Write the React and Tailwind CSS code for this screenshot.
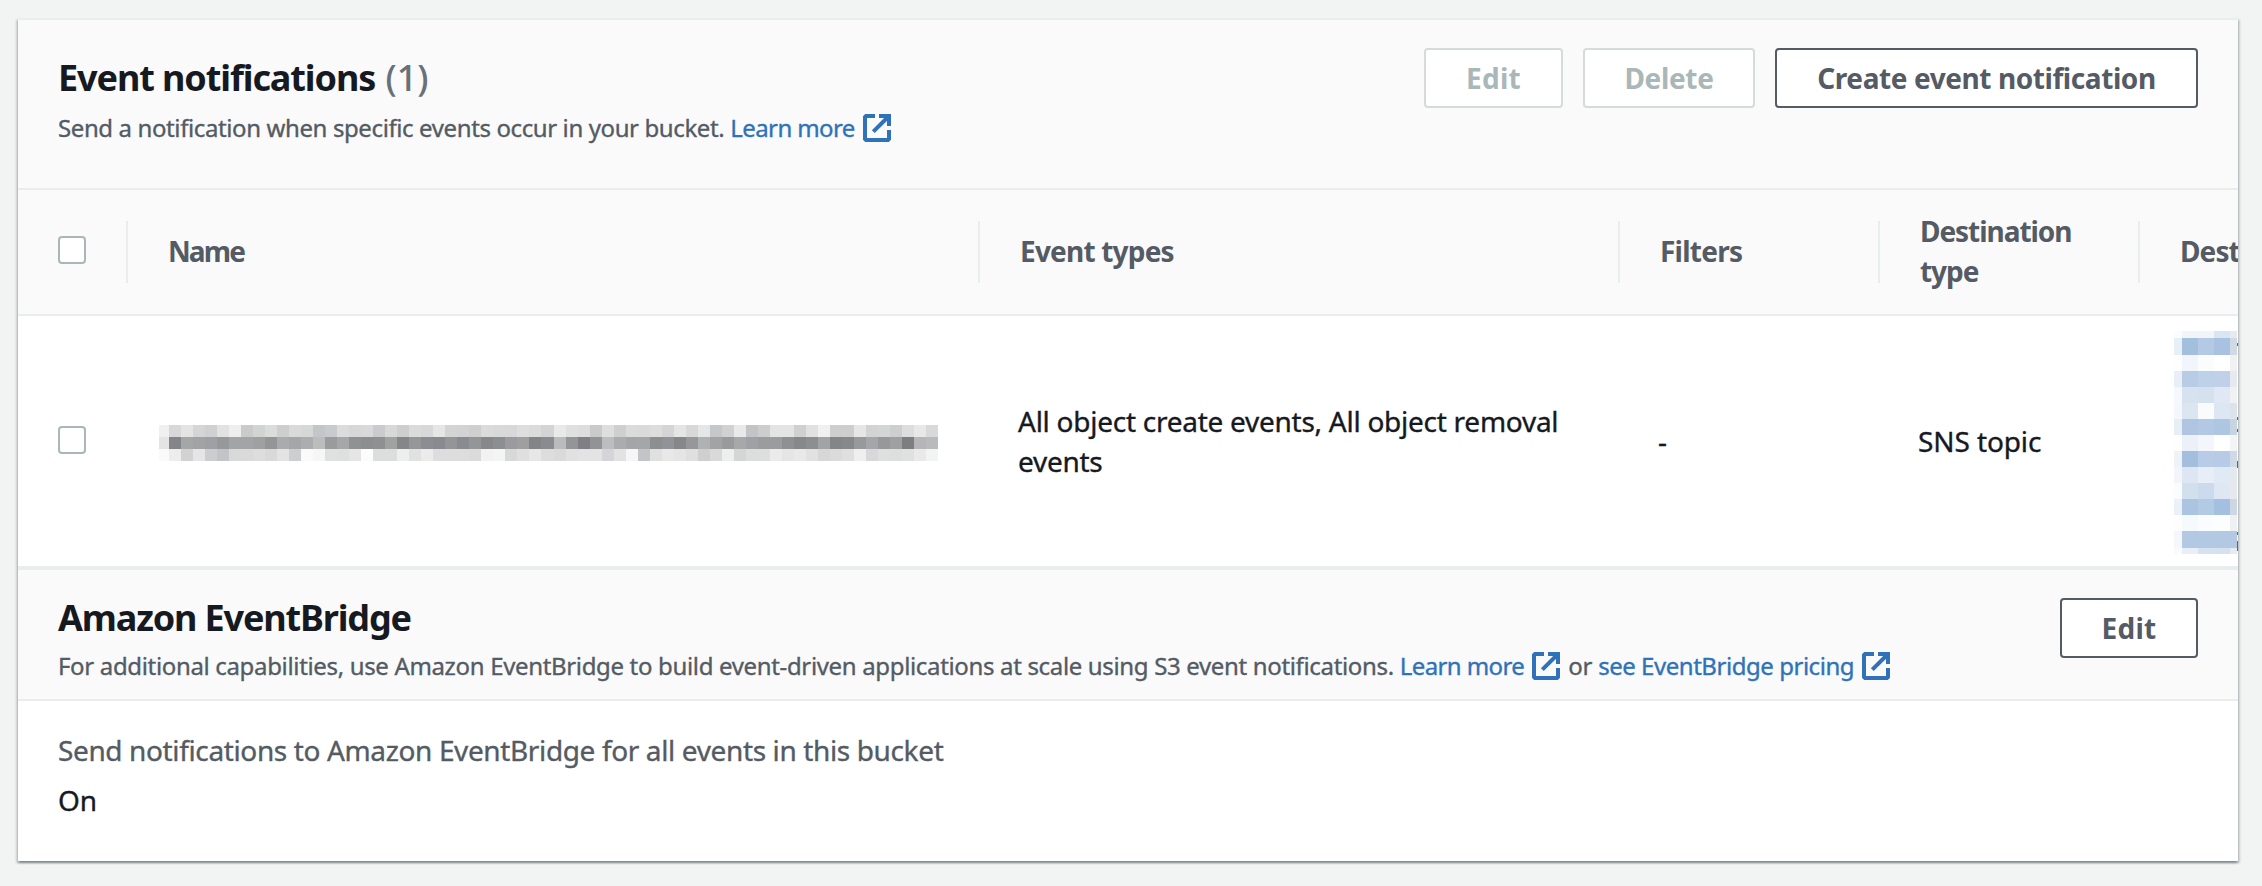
import React from "react";

const NAME_ROWS = [
  "f0f0f0 d8d8da e4e4e4 d4d5d7 cfd0d2 e2e2e2 eeeeee cacaca d2d4d2 dadddc cecece dadada d6d8d7 c4c5c8 c9cacd dcdcdc d7d7da d9d9da cacbce d7d9d8 cecece dadbdb d8d8db e6e6e6 d3d4d4 d3d3d3 cfcfd0 dadcdb d8dad9 d8d8db dededf dadcdc d4d4d6 e9e9ea dfe0df dddddd cacacb dedede cfcfd0 dadcdb dadada dddddd d5d5d5 e5e5e5 d8d8d8 e5e7e6 c6c7ca d0d2d2 e9e9e9 c3c4c7 cdcdcd e4e4e4 e3e5e4 d0d0d0 e1e1e1 f0f0f0 cecece cecece e6e6e6 d2d4d3 d4d5d5 cdced1 dddddd e8e8e8 d9d9d9",
  "e4e4e4 848589 a5a6a8 a2a3a5 9fa0a3 979899 a3a4a7 a3a4a6 9fa0a1 939597 aaabad a5a6a8 acadaf bcbcbc 999b9d a6a7a9 909193 8d8e90 8f9091 a1a1a2 858689 959698 8c8d93 898a8f 949597 8a8b90 949597 87888a 8d8e91 9b9b9d 9f9fa0 838488 8a8b8e bbbbbd 949597 807f84 929397 bdbdbf abacae a4a5a7 a5a6a8 8d8e90 929398 868789 979799 b0b1b3 a2a3a5 999a9c a7a8aa a0a1a4 9b9c9d 9b9c9e 8f9092 87888b 8d8e90 a2a3a5 848589 87888a 98999c a5a6a9 97989a 9fa0a2 7d7e80 b6b6b8 b8babb",
  "fafafa ecedec d2d2d2 e5e5e5 cccdd0 c3c4c7 d8dad9 dadada dddddd d9d9d9 e3e3e3 cdced0 fafafa f6f6f6 dfe0e0 dee0df e5e5e5 fcfcfc dcdedd dcdedd edefee e1e1e1 ebebeb dddddd dddddd dddddd dbdbdb f2f2f2 f3f5f4 d8d8d8 dfdfdf e7e7e7 dddddd dadada e1e1e1 e3e3e3 e3e3e3 d4d5d8 e2e2e2 f5f5f5 c3c4c7 e0e0e0 e8e8e8 e5e5e5 dfdfdf cfcfcf d9d9d9 edefee d4d6d6 dcdddd dddfdf ebebeb e5e5e5 e9e9e9 e1e1e1 d7d7d7 dbdbdb dfdfdf efefef d8d8d8 dfdfdf dcdfde e0e0e0 e9e9e9 f2f4f3",
].map((row) => row.split(" "));

const DEST_ROWS = [
  "fafcfe f1f5fa f1f5fb d9e5f2 e6eaef",
  "e8f0f7 a3bfde b4cae4 a9c2e1 cfdae6",
  "fefefe f2f5fb fafcfe ffffff f0f2f2",
  "e8eff6 b8cce5 bdd1e8 bfd0e8 e6eaf0",
  "f5f8fc d7e2f0 d5e1ef e0e8f5 f0f2f1",
  "f4f7fc dce6f1 f9fbfc dde7f3 dce3ea",
  "e7eff6 afc5e1 b2c8e3 adc6e1 c7d5e3",
  "fefefe ecf0f8 f3f6fc ffffff f3f4f4",
  "eef3f8 a3bfdd b9cce7 b7cbe6 d0dae6",
  "f2f6fb dde6f2 e7eef8 dfeaf5 e4e9ee",
  "fafcfe d2e0ee cbdaed dee7f3 e5e8ee",
  "eaf1f8 abc4e1 b3cae4 a4bfdf ccd7e3",
  "fefefe f5fafd fbfcff fcfdfe eff0f1",
  "f4f7fb b2c8e3 b2c8e3 b2c8e3 b2c8e3",
  "fafbfe e9eff8 d7e1f0 d5e1f1 e6eaf2",
].map((row) => row.split(" "));

function ExternalIcon() {
  return (
    <svg className="ml-2 h-7 w-7 shrink-0" viewBox="0 0 28 28" fill="none" stroke="#2f72b9" strokeWidth="4">
      <path d="M12 2H3L2 3V25L3 26H25L26 25V16" />
      <path d="M16 2H26V12" />
      <path d="M26 2L10.3 17.7" />
    </svg>
  );
}

function Link({ children, className }) {
  return (
    <a href="#" className={`flex items-center text-[#2f72b9] ${className}`}>
      <span>{children}</span>
      <ExternalIcon />
    </a>
  );
}

function Button({ children, disabled, className }) {
  return (
    <button
      disabled={disabled}
      className={`flex h-[60px] items-center justify-center rounded-[4px] border-2 bg-white pb-px text-[28px] leading-10 font-bold ${
        disabled ? "border-[#d5dbdb] text-[#aab7b8]" : "border-[#545b64] text-[#545b64]"
      } ${className}`}
    >
      {children}
    </button>
  );
}

function Checkbox({ className }) {
  return (
    <span
      role="checkbox"
      aria-checked="false"
      className={`block h-7 w-7 rounded-[4px] border-2 border-[#aab7b8] bg-white ${className}`}
    />
  );
}

function HeaderCell({ children, className }) {
  return (
    <div className="flex items-center">
      <span className="h-[62px] w-0.5 shrink-0 bg-[#eaeded]" />
      <span className={`pb-0.5 pl-10 ${className}`}>{children}</span>
    </div>
  );
}

function NameMosaic() {
  return (
    <div className="flex flex-col">
      {NAME_ROWS.map((row, r) => (
        <div key={r} className="flex h-3">
          {row.map((c, i) => (
            <span key={i} className={i === 0 ? "w-2.5" : "w-[12.03px]"} style={{ background: `#${c}` }} />
          ))}
        </div>
      ))}
    </div>
  );
}

function DestMosaic() {
  const last = DEST_ROWS.length - 1;
  return (
    <div className="relative flex w-16 flex-col">
      {DEST_ROWS.map((row, r) => (
        <div key={r} className={`flex ${r === 0 ? "h-[7.3px]" : r === last ? "h-[6.3px]" : "h-[16.08px]"}`}>
          {row.map((c, i) => (
            <span
              key={i}
              className={i === 0 ? "w-2" : i === 4 ? "w-[7px]" : "w-4"}
              style={{ background: `#${c}` }}
            />
          ))}
        </div>
      ))}
      <span className="absolute top-[12px] left-[63px] h-[3px] w-px bg-[#2f72b9]" />
      <span className="absolute top-[86px] left-[63px] h-[3px] w-px bg-[#2f72b9]" />
      <span className="absolute top-[98px] left-[63px] h-[3px] w-px bg-[#2f72b9]" />
      <span className="absolute top-[130px] left-[63px] h-[7px] w-px bg-[#2f72b9]" />
      <span className="absolute top-[201px] left-[63px] h-[3px] w-px bg-[#2f72b9]" />
      <span className="absolute top-[210px] left-[63px] h-[10px] w-px bg-[#2f72b9]" />
    </div>
  );
}

const COLUMNS = "grid grid-cols-[108px_852px_640px_260px_260px_100px]";
const STROKE = "[-webkit-text-stroke:0.35px_currentColor]";

export default function App() {
  return (
    <div className="h-[886px] w-[2262px] overflow-hidden bg-[#f2f3f3] pt-[18px] pl-[18px] font-['Noto_Sans','Open_Sans',sans-serif] text-[#16191f]">
      <main className="flex h-[843px] w-[2220px] flex-col border-t-2 border-[#eaeded] bg-white shadow-[0_2px_2px_0_rgba(0,28,36,0.3),2px_2px_2px_0_rgba(0,28,36,0.15),-2px_2px_2px_0_rgba(0,28,36,0.15)]">
        <header className="flex h-[170px] shrink-0 justify-between border-b-2 border-[#eaeded] bg-[#fafafa] pr-10 pl-10">
          <div className="flex flex-col pt-[36px]">
            <h2 className="text-4xl leading-[44px] font-bold tracking-[-1.1px]">
              Event notifications <span className="ml-0.5 font-medium tracking-normal text-[#687078]">(1)</span>
            </h2>
            <div className={`mt-[10px] flex h-9 items-center text-2xl leading-9 text-[#545b64] ${STROKE}`}>
              <span className="tracking-[-0.39px]">Send a notification when specific events occur in your bucket.</span>
              <Link className="ml-[6px] tracking-[-0.6px]">Learn more</Link>
            </div>
          </div>
          <div className="flex gap-5 pt-[28px]">
            <Button disabled className="w-[139px] tracking-[0.3px]">Edit</Button>
            <Button disabled className="w-[172px] tracking-[-0.35px]">Delete</Button>
            <Button className="w-[423px] tracking-[-0.42px]">Create event notification</Button>
          </div>
        </header>

        <div className="h-[126px] shrink-0 overflow-hidden border-b-2 border-[#eaeded] bg-[#fafafa] text-[28px] leading-10 font-bold text-[#545b64]">
          <div className={`h-full ${COLUMNS}`}>
            <div className="flex items-center pl-10">
              <Checkbox className="mb-1" />
            </div>
            <HeaderCell className="tracking-[-1.9px]">Name</HeaderCell>
            <HeaderCell className="tracking-[-0.8px]">Event types</HeaderCell>
            <HeaderCell className="tracking-[-0.75px]">Filters</HeaderCell>
            <HeaderCell className="pr-10 tracking-[-1.05px]">Destination type</HeaderCell>
            <HeaderCell className="tracking-[-0.9px]">Dest</HeaderCell>
          </div>
        </div>

        <div className="h-[254px] shrink-0 overflow-hidden border-b-4 border-[#eaeded] text-[28px] leading-10">
          <div className={`h-full items-center ${COLUMNS}`}>
            <div className="pl-10">
              <Checkbox className="mb-0.5" />
            </div>
            <div className="flex pt-1 pl-[33px]">
              <NameMosaic />
            </div>
            <div className={`pl-10 tracking-[-0.26px] ${STROKE}`}>
              All object create events, All object removal events
            </div>
            <div className={`pl-10 ${STROKE}`}>-</div>
            <div className={`pl-10 tracking-[-0.1px] ${STROKE}`}>SNS topic</div>
            <div className="flex pt-[3px] pl-9">
              <DestMosaic />
            </div>
          </div>
        </div>

        <header className="flex h-[131px] shrink-0 justify-between border-b-2 border-[#eaeded] bg-[#fafafa] pr-10 pl-10">
          <div className="flex flex-col pt-[26px]">
            <h2 className="text-4xl leading-[44px] font-bold tracking-[-1.15px]">Amazon EventBridge</h2>
            <div className={`mt-2 flex h-9 items-center text-2xl leading-9 whitespace-nowrap text-[#545b64] ${STROKE}`}>
              <span className="tracking-[-0.34px]">
                For additional capabilities, use Amazon EventBridge to build event-driven applications at scale using S3
                event notifications.
              </span>
              <Link className="ml-[6px] tracking-[-0.6px]">Learn more</Link>
              <span className="ml-2 tracking-[-0.3px]">or</span>
              <Link className="ml-[6px] tracking-[-0.46px]">see EventBridge pricing</Link>
            </div>
          </div>
          <div className="pt-[28px]">
            <Button className="w-[138px] tracking-[0.3px]">Edit</Button>
          </div>
        </header>

        <section className={`flex flex-col gap-2.5 px-10 pt-[29px] text-[28px] leading-10 ${STROKE}`}>
          <div className="tracking-[-0.37px] text-[#545b64]">
            Send notifications to Amazon EventBridge for all events in this bucket
          </div>
          <div>On</div>
        </section>
      </main>
    </div>
  );
}
